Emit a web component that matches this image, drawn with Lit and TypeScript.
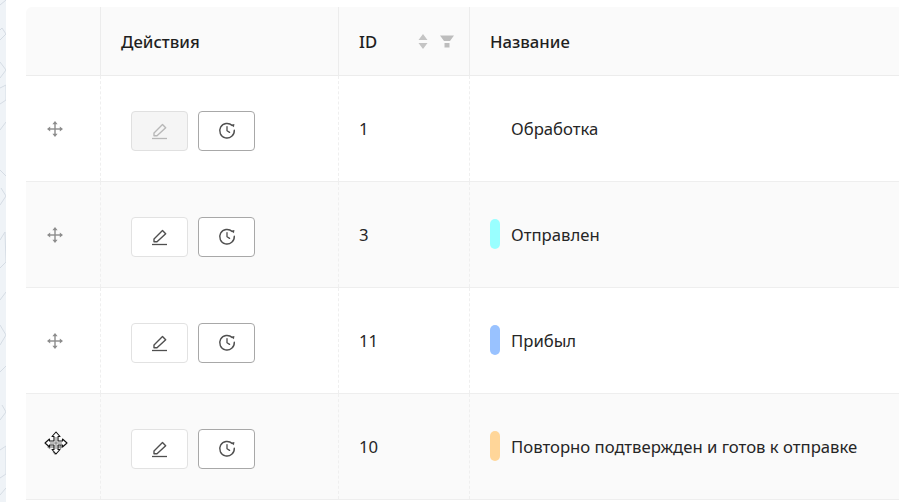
import { LitElement, html, css, svg } from "lit";
import { customElement } from "lit/decorators.js";

const rows = [
  { id: "1", name: "Обработка", color: "", disabled: true },
  { id: "3", name: "Отправлен", color: "#99ffff", disabled: false },
  { id: "11", name: "Прибыл", color: "#99c2ff", disabled: false },
  { id: "10", name: "Повторно подтвержден и готов к отправке", color: "#ffd699", disabled: false },
];

const dragIcon = html`<svg class="drag" width="18" height="18" viewBox="0 0 18 18" fill="#8c8c8c">
  <rect x="8.300" y="3" width="1.400" height="12"/><rect x="3" y="8.300" width="12" height="1.400"/>
  <path d="M9 1 11.600 4.200H6.400ZM9 17 11.600 13.800H6.400ZM1 9 4.200 6.400V11.600ZM17 9 13.800 6.400V11.600Z"/>
</svg>`;

const editIcon = html`<svg width="21" height="20" viewBox="0 0 21 20" fill="none" stroke="currentColor" stroke-width="1.400">
  <path d="M5 14.800V12L13.500 3.500 16.700 6.700 8 14.800Z" stroke-linejoin="round"/>
  <path d="M3 17.500H18" stroke-width="1.300"/>
</svg>`;

const clockIcon = html`<svg width="18" height="18" viewBox="0 0 18 18" fill="none" stroke="#4f4f4f" stroke-width="1.400">
  <path d="M14.200 3.600A7.300 7.300 0 1 0 16.300 8.300" stroke-linecap="round"/>
  <path d="M13 2.800 16 5.300 16.400 2Z" fill="#4f4f4f" stroke="none"/>
  <path d="M9 4.600V8.700L11.600 10.400" stroke-linecap="round" stroke-width="1.300"/>
</svg>`;

const doodles = svg`
  <g fill="none" stroke="#d5dce4" stroke-width="1">
    <path d="M0 5 6 0M0 40 6 34 2 28 0 30M0 62 6 70 0 78M0 88 6 85 6 100 0 104M0 130 6 122M0 170 6 176M0 205 6 196 1 188M0 240 5 232 6 262 0 268M0 300 6 292M0 325 6 335 0 345M0 372 6 366M0 420 6 412 2 405M0 450 6 446 6 474 0 478M0 495 6 488"/>
  </g>`;

@customElement("app-root")
export class AppRoot extends LitElement {
  static styles = css`
    :host {
      display: block;
      width: 899px;
      height: 502px;
      overflow: hidden;
      background: #fff;
      font-family: "Noto Sans", "Open Sans", sans-serif;
      font-size: 16.7px;
      color: #262626;
    }
    .page { display: flex; height: 502px; position: relative; }
    .strip { width: 6px; background: #eff3f7; flex: none; }
    .strip svg { display: block; }
    .main { flex: none; margin-left: 20px; padding-top: 7px; width: 873px; }
    .row {
      display: grid;
      grid-template-columns: 75px 238px 131px 1fr;
      height: 106px;
      border-bottom: 1px solid #eeeeee;
      box-sizing: border-box;
    }
    .row.head {
      height: 69px;
      background: #fafafa;
      font-weight: 500;
      color: #1f1f1f;
      border-radius: 6px 0 0 0;
      border-bottom-color: #ececec;
    }
    .row.alt { background: #fafafa; }
    .cell {
      display: flex;
      align-items: center;
      box-sizing: border-box;
      border-right: 1px dashed #efefef;
      padding-left: 20px;
      min-width: 0;
    }
    .head .cell { border-right: 1px solid #ececec; padding-top: 1px; }
    .cell:last-child { border-right: none; }
    .drag { display: block; }
    .c-actions { padding-left: 30px; padding-top: 4px; gap: 10px; }
    .btn {
      width: 57px;
      height: 40px;
      box-sizing: border-box;
      border: 1px solid #e2e2e2;
      border-radius: 4px;
      background: #fff;
      display: flex;
      align-items: center;
      justify-content: center;
      color: #4f4f4f;
    }
    .btn.hist { border-color: #a8a8a8; }
    .btn.off { background: #f5f5f5; border-color: #e0e0e0; color: #b8b8b8; }
    .c-id { justify-content: space-between; padding-right: 15px; }
    .sorters { display: flex; align-items: center; gap: 12px; }
    .name { display: flex; align-items: center; gap: 11px; white-space: nowrap; }
    .dot { width: 10px; height: 30px; border-radius: 5px; flex: none; margin-top: -2px; }
    .cursor { position: absolute; left: 44px; top: 431px; }
  `;

  render() {
    return html`<div class="page">
      <div class="strip"><svg width="6" height="502">${doodles}</svg></div>
      <div class="main">
        <div class="row head">
          <div class="cell"></div>
          <div class="cell">Действия</div>
          <div class="cell c-id">
            <span>ID</span>
            <span class="sorters">
              <svg width="10" height="17" viewBox="0 0 10 17" fill="#c4c4c4"><path d="M5 1 9.500 7H.5ZM5 16 .5 10H9.500Z"/></svg>
              <svg width="14" height="14" viewBox="0 0 14 14" fill="#bdbdbd"><path d="M0 .5H14L10 6H4ZM4.500 8H9.500V12.500H4.500Z"/></svg>
            </span>
          </div>
          <div class="cell">Название</div>
        </div>
        ${rows.map(
          (r, i) => html`<div class="row ${i % 2 ? "alt" : ""}">
            <div class="cell">${dragIcon}</div>
            <div class="cell c-actions">
              <div class="btn ${r.disabled ? "off" : ""}">${editIcon}</div>
              <div class="btn hist">${clockIcon}</div>
            </div>
            <div class="cell">${r.id}</div>
            <div class="cell">
              <div class="name">
                <span class="dot" style="background:${r.color || "transparent"}"></span>
                <span>${r.name}</span>
              </div>
            </div>
          </div>`
        )}
      </div>
      <svg class="cursor" width="24" height="24" viewBox="0 0 24 24" fill="#fff" stroke="#111" stroke-width="1.100" stroke-linejoin="round">
        <path d="M12 1 16 5.500H14V10H18.500V8L23 12 18.500 16V14H14V18.500H16L12 23 8 18.500H10V14H5.500V16L1 12 5.500 8V10H10V5.500H8Z"/>
        <path d="M12 6V18M6 12H18" fill="none" stroke="#777" stroke-width="1"/>
      </svg>
    </div>`;
  }
}
